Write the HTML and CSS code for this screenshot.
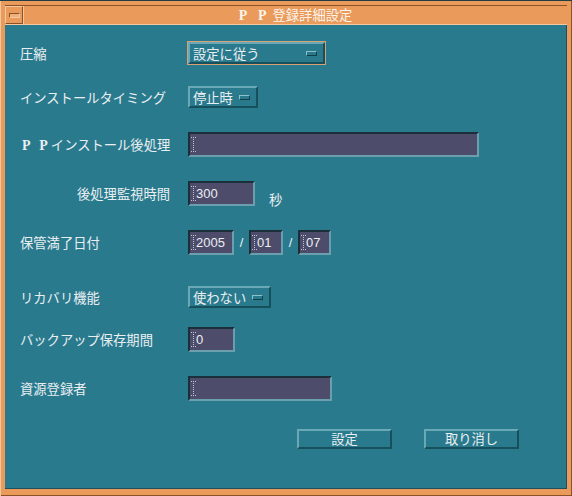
FILE: index.html
```html
<!DOCTYPE html>
<html lang="ja">
<head>
<meta charset="utf-8">
<link rel="stylesheet" href="styles.css">
</head>
<body>
<div class="frame">
  <div class="titlebar">
    <div class="menubtn"><span class="dash"></span></div>
    <div class="title"><span class="pp">P P</span>登録詳細設定</div>
  </div>
  <div class="client">
    <div class="row r1">
      <div class="label">圧縮</div>
      <div class="opt focus w137">設定に従う<span class="ind"></span></div>
    </div>
    <div class="row r2">
      <div class="label">インストールタイミング</div>
      <div class="opt w70">停止時<span class="ind"></span></div>
    </div>
    <div class="row r3">
      <div class="label"><span class="pp wide">P P</span>インストール後処理</div>
      <div class="field w291"><svg class="caret" width="5" height="15"><path d="M0 .5h5M0 14.5h5M2.5 0v15" stroke="#c2c2d0" stroke-dasharray="1 1"/></svg></div>
    </div>
    <div class="row r4">
      <div class="label indent">後処理監視時間</div>
      <div class="field w67"><svg class="caret" width="5" height="15"><path d="M0 .5h5M0 14.5h5M2.5 0v15" stroke="#c2c2d0" stroke-dasharray="1 1"/></svg><span class="val">300</span></div>
      <div class="unit">秒</div>
    </div>
    <div class="row r5">
      <div class="label">保管満了日付</div>
      <div class="field w46"><svg class="caret" width="5" height="15"><path d="M0 .5h5M0 14.5h5M2.5 0v15" stroke="#c2c2d0" stroke-dasharray="1 1"/></svg><span class="val">2005</span></div>
      <div class="slash">/</div>
      <div class="field w34"><svg class="caret" width="5" height="15"><path d="M0 .5h5M0 14.5h5M2.5 0v15" stroke="#c2c2d0" stroke-dasharray="1 1"/></svg><span class="val">01</span></div>
      <div class="slash">/</div>
      <div class="field w33"><svg class="caret" width="5" height="15"><path d="M0 .5h5M0 14.5h5M2.5 0v15" stroke="#c2c2d0" stroke-dasharray="1 1"/></svg><span class="val">07</span></div>
    </div>
    <div class="row r6">
      <div class="label">リカバリ機能</div>
      <div class="opt w83">使わない<span class="ind"></span></div>
    </div>
    <div class="row r7">
      <div class="label">バックアップ保存期間</div>
      <div class="field w47"><svg class="caret" width="5" height="15"><path d="M0 .5h5M0 14.5h5M2.5 0v15" stroke="#c2c2d0" stroke-dasharray="1 1"/></svg><span class="val">0</span></div>
    </div>
    <div class="row r8">
      <div class="label">資源登録者</div>
      <div class="field w144"><svg class="caret" width="5" height="15"><path d="M0 .5h5M0 14.5h5M2.5 0v15" stroke="#c2c2d0" stroke-dasharray="1 1"/></svg></div>
    </div>
    <div class="actions">
      <div class="btn">設定</div>
      <div class="btn">取り消し</div>
    </div>
  </div>
</div>
</body>
</html>
```
FILE: styles.css
```css
html, body {
  margin: 0;
  padding: 0;
  background: #2a7a8e;
}
.frame {
  width: 572px;
  height: 496px;
  box-sizing: border-box;
  background: #ea9a5a;
  border-top: 1px solid #1f3d44;
  padding: 5px 5px 7px 5px;
  display: flex;
  flex-direction: column;
  font-family: "Noto Sans CJK JP", "Noto Sans", sans-serif;
  font-size: 13.3px;
  color: #e9eff1;
  box-shadow: inset 1px 0 0 #f6c8a0, inset -1px -1px 0 #8b5228;
}
.titlebar {
  height: 18px;
  display: flex;
  background: #ea9a5a;
  box-shadow: 0 -1px 0 #8b5228, 0 1px 0 #8b5228;
}
.menubtn {
  width: 18px;
  height: 18px;
  box-sizing: border-box;
  border: 1px solid;
  border-color: #f6c8a0 #8b5228 #8b5228 #f6c8a0;
  display: flex;
  align-items: center;
  justify-content: center;
}
.dash {
  width: 9px;
  height: 3px;
  background: #f0b07c;
  border: 1px solid;
  border-color: #8b5228 #f6c8a0 #f6c8a0 #8b5228;
}
.title {
  flex: 1;
  text-align: center;
  line-height: 18px;
  color: #fbf3ea;
  border-left: 1px solid #f6c8a0;
}
.pp {
  font-family: "Liberation Serif", serif;
  font-weight: bold;
  font-size: 14px;
  letter-spacing: 4px;
  margin-right: 2px;
}
.pp.wide {
  letter-spacing: 3px;
  margin-left: 2px;
  margin-right: 0;
}
.client {
  flex: 1;
  background: #2a7a8e;
  border-top: 1px solid #f6c8a0;
  box-shadow: inset -1px -1px 0 #1d4f5c;
  display: flex;
  flex-direction: column;
  padding-top: 17px;
}
.row {
  display: flex;
  align-items: center;
}
.r2 { margin-top: 22px; }
.r3 { margin-top: 24px; }
.r4 { margin-top: 24px; }
.r5 { margin-top: 24px; }
.r6 { margin-top: 31px; }
.r7 { margin-top: 19px; }
.r8 { margin-top: 24px; }
.label {
  width: 183px;
  box-sizing: border-box;
  padding-left: 15px;
  white-space: nowrap;
}
.label.indent {
  padding-left: 72px;
}
.opt {
  height: 22px;
  box-sizing: border-box;
  border: 2px solid;
  border-color: #6aa7b7 #17505d #17505d #6aa7b7;
  padding: 0 6px 0 3px;
  display: flex;
  align-items: center;
  justify-content: space-between;
}
.opt.focus {
  outline: 1px solid #d7a173;
}
.ind {
  width: 11px;
  height: 5px;
  box-sizing: border-box;
  border: 1px solid;
  border-color: #8cc0cc #123f4a #123f4a #8cc0cc;
  background: #2a7a8e;
  margin-left: 5px;
}
.w137 { width: 137px; }
.w70 { width: 70px; }
.w83 { width: 83px; }
.field {
  height: 25px;
  box-sizing: border-box;
  background: #4d4c6a;
  border: 2px solid;
  border-color: #1a2f3a #6b9fae #6b9fae #1a2f3a;
  display: flex;
  align-items: center;
  padding-left: 1px;
  font-family: "Liberation Sans", sans-serif;
  font-size: 13px;
  color: #eceef2;
}
.caret {
  display: block;
  flex: none;
}
.w291 { width: 291px; }
.w67 { width: 67px; }
.w46 { width: 46px; }
.w34 { width: 34px; }
.w33 { width: 33px; }
.w47 { width: 47px; }
.w144 { width: 144px; }
.unit {
  align-self: flex-end;
  margin-left: 14px;
  margin-bottom: -3px;
}
.slash {
  width: 15px;
  text-align: center;
  font-family: "Liberation Sans", sans-serif;
  font-size: 13px;
}
.actions {
  display: flex;
  gap: 32px;
  padding-left: 292px;
  margin-top: 28px;
}
.btn {
  width: 95px;
  height: 20px;
  box-sizing: border-box;
  border: 2px solid;
  border-color: #6aa7b7 #17505d #17505d #6aa7b7;
  display: flex;
  align-items: center;
  justify-content: center;
  line-height: 1;
}
```
